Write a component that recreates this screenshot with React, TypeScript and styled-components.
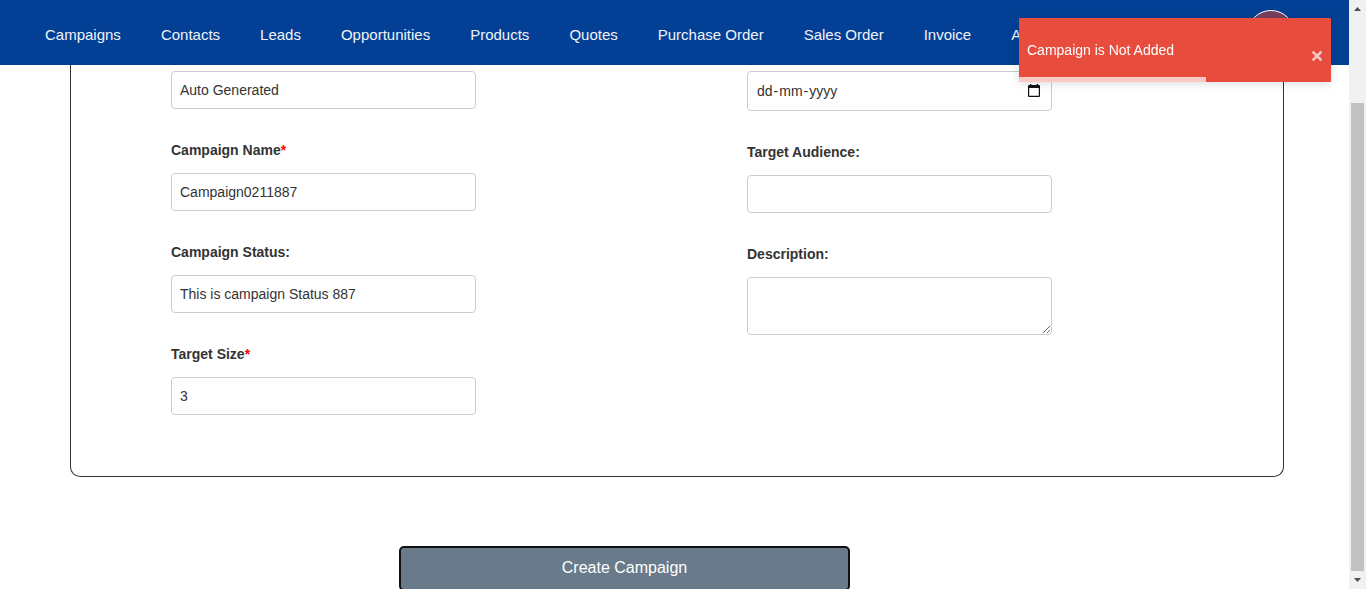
import React from 'react';
import styled, { createGlobalStyle } from 'styled-components';

const GlobalStyle = createGlobalStyle`
  *, *::before, *::after { box-sizing: border-box; }
  body {
    margin: 0;
    overflow: hidden;
    background: #fff;
    color: #333;
    font-family: Arial, "Liberation Sans", sans-serif;
    font-size: 14px;
  }
`;

const Shell = styled.div`
  display: flex;
  height: 589px;
  width: 1366px;
  overflow: hidden;
`;

const Page = styled.div`
  flex: 1;
  display: flex;
  flex-direction: column;
  min-width: 0;
  overflow: hidden;
`;

const Header = styled.header`
  flex: none;
  height: 65px;
  padding: 10px 54px 0 45px;
  display: flex;
  justify-content: space-between;
  align-items: flex-start;
  background: #034095;
`;

const Nav = styled.nav`
  display: flex;
  gap: 40px;
  padding-top: 16px;
`;

const NavLink = styled.a`
  color: #f0f3f8;
  font-size: 15px;
  line-height: 17px;
  white-space: nowrap;
`;

const Avatar = styled.div`
  width: 48px;
  height: 48px;
  border-radius: 50%;
  border: 1px solid #fff;
  background: #783f60;
`;

const FormCard = styled.section`
  flex: none;
  width: 1214px;
  height: 412px;
  margin-left: 70px;
  padding: 6px 0 0 100px;
  display: flex;
  border: 1px solid #333;
  border-top: 0;
  border-radius: 0 0 10px 10px;
`;

const Column = styled.div`
  flex: 0 0 576px;
  display: flex;
  flex-direction: column;
  align-items: flex-start;
`;

const Field = styled.div`
  display: flex;
  flex-direction: column;
  margin-bottom: 33px;
`;

const Label = styled.label`
  font-weight: bold;
  line-height: 16px;
  margin-bottom: 15px;
`;

const Required = styled.span`
  color: #f00;
`;

const Input = styled.input`
  width: 305px;
  height: 38px;
  padding: 0 8px;
  border: 1px solid #ccc;
  border-radius: 4px;
  background: #fff;
  color: #333;
  font: 14px Arial, "Liberation Sans", sans-serif;
  outline: 0;
`;

const DateBox = styled.div`
  width: 305px;
  height: 40px;
  padding: 0 11px 0 9px;
  display: flex;
  align-items: center;
  justify-content: space-between;
  border: 1px solid #ccc;
  border-radius: 4px;
`;

const DateText = styled.span`
  display: flex;
  gap: 1px;
`;

const CalendarIcon = styled.svg`
  width: 12px;
  height: 13px;
  margin-bottom: 1px;
`;

const TextArea = styled.textarea`
  width: 305px;
  height: 58px;
  border: 1px solid #ccc;
  border-radius: 4px;
  outline: 0;
  resize: vertical;
`;

const SubmitButton = styled.button`
  flex: none;
  width: 451px;
  height: 45px;
  margin: 69px 0 0 399px;
  padding: 0 0 2px;
  border: 2px solid #101010;
  border-radius: 5px;
  background: #697a8a;
  color: #fff;
  font: 16px Arial, "Liberation Sans", sans-serif;
`;

const ScrollTrack = styled.div`
  flex: none;
  width: 17px;
  padding: 0 2px;
  display: flex;
  flex-direction: column;
  justify-content: space-between;
  background: #f1f1f1;
`;

const ScrollArrow = styled.svg`
  width: 13px;
  height: 18px;
  display: block;
`;

const ScrollThumb = styled.div`
  height: 468px;
  margin-top: 85px;
  background: #c1c1c1;
`;

const Toast = styled.div`
  position: fixed;
  top: 18px;
  left: 1019px;
  width: 312px;
  height: 64px;
  padding: 0 8px;
  display: flex;
  align-items: center;
  justify-content: space-between;
  overflow: hidden;
  border-radius: 1px;
  background: #e74c3c;
  color: #fff;
  box-shadow: 0 1px 10px 0 rgba(0, 0, 0, 0.1), 0 2px 15px 0 rgba(0, 0, 0, 0.05);
  will-change: transform;
`;

const CloseIcon = styled.svg`
  width: 12px;
  height: 12px;
  margin-top: 12px;
`;

const Progress = styled.div`
  position: absolute;
  left: 0;
  bottom: 0;
  width: 187px;
  height: 5px;
  background: rgba(255, 255, 255, 0.7);
`;

const links = ['Campaigns', 'Contacts', 'Leads', 'Opportunities', 'Products', 'Quotes', 'Purchase Order', 'Sales Order', 'Invoice', 'A'];

interface TextFieldProps {
  label: string;
  value: string;
  required?: boolean;
}

function TextField({ label, value, required }: TextFieldProps) {
  return (
    <Field>
      <Label>{label}{required && <Required>*</Required>}</Label>
      <Input defaultValue={value} />
    </Field>
  );
}

export default function App() {
  return (
    <>
      <GlobalStyle />
      <Shell>
        <Page>
          <Header>
            <Nav>{links.map((link) => <NavLink key={link}>{link}</NavLink>)}</Nav>
            <Avatar />
          </Header>
          <FormCard>
            <Column>
              <Field><Input defaultValue="Auto Generated" /></Field>
              <TextField label="Campaign Name" value="Campaign0211887" required />
              <TextField label="Campaign Status:" value="This is campaign Status 887" />
              <TextField label="Target Size" value="3" required />
            </Column>
            <Column>
              <Field>
                <DateBox>
                  <DateText><span>dd</span><span>-</span><span>mm</span><span>-</span><span>yyyy</span></DateText>
                  <CalendarIcon viewBox="0 0 12 13" fill="#111">
                    <path fillRule="evenodd" d="M2 0h1.3v1h5.4V0H10v1h1q1 0 1 1v9.8q0 1.2-1 1.2H1q-1 0-1-1.2V2q0-1 1-1h1zM1.2 4v7.8h9.6V4z" />
                  </CalendarIcon>
                </DateBox>
              </Field>
              <TextField label="Target Audience:" value="" />
              <Field>
                <Label>Description:</Label>
                <TextArea />
              </Field>
            </Column>
          </FormCard>
          <SubmitButton>Create Campaign</SubmitButton>
        </Page>
        <ScrollTrack>
          <ScrollArrow viewBox="0 0 13 18"><path d="M3 11h7L6.5 7z" fill="#505050" /></ScrollArrow>
          <ScrollThumb />
          <ScrollArrow viewBox="0 0 13 18"><path d="M3 7h7l-3.5 4z" fill="#505050" /></ScrollArrow>
        </ScrollTrack>
      </Shell>
      <Toast>
        <span>Campaign is Not Added</span>
        <CloseIcon viewBox="0 0 12 12"><path d="M1.6 1.6l8.8 8.8M10.4 1.6l-8.8 8.8" stroke="#f8c9c4" strokeWidth="2.6" /></CloseIcon>
        <Progress />
      </Toast>
    </>
  );
}
